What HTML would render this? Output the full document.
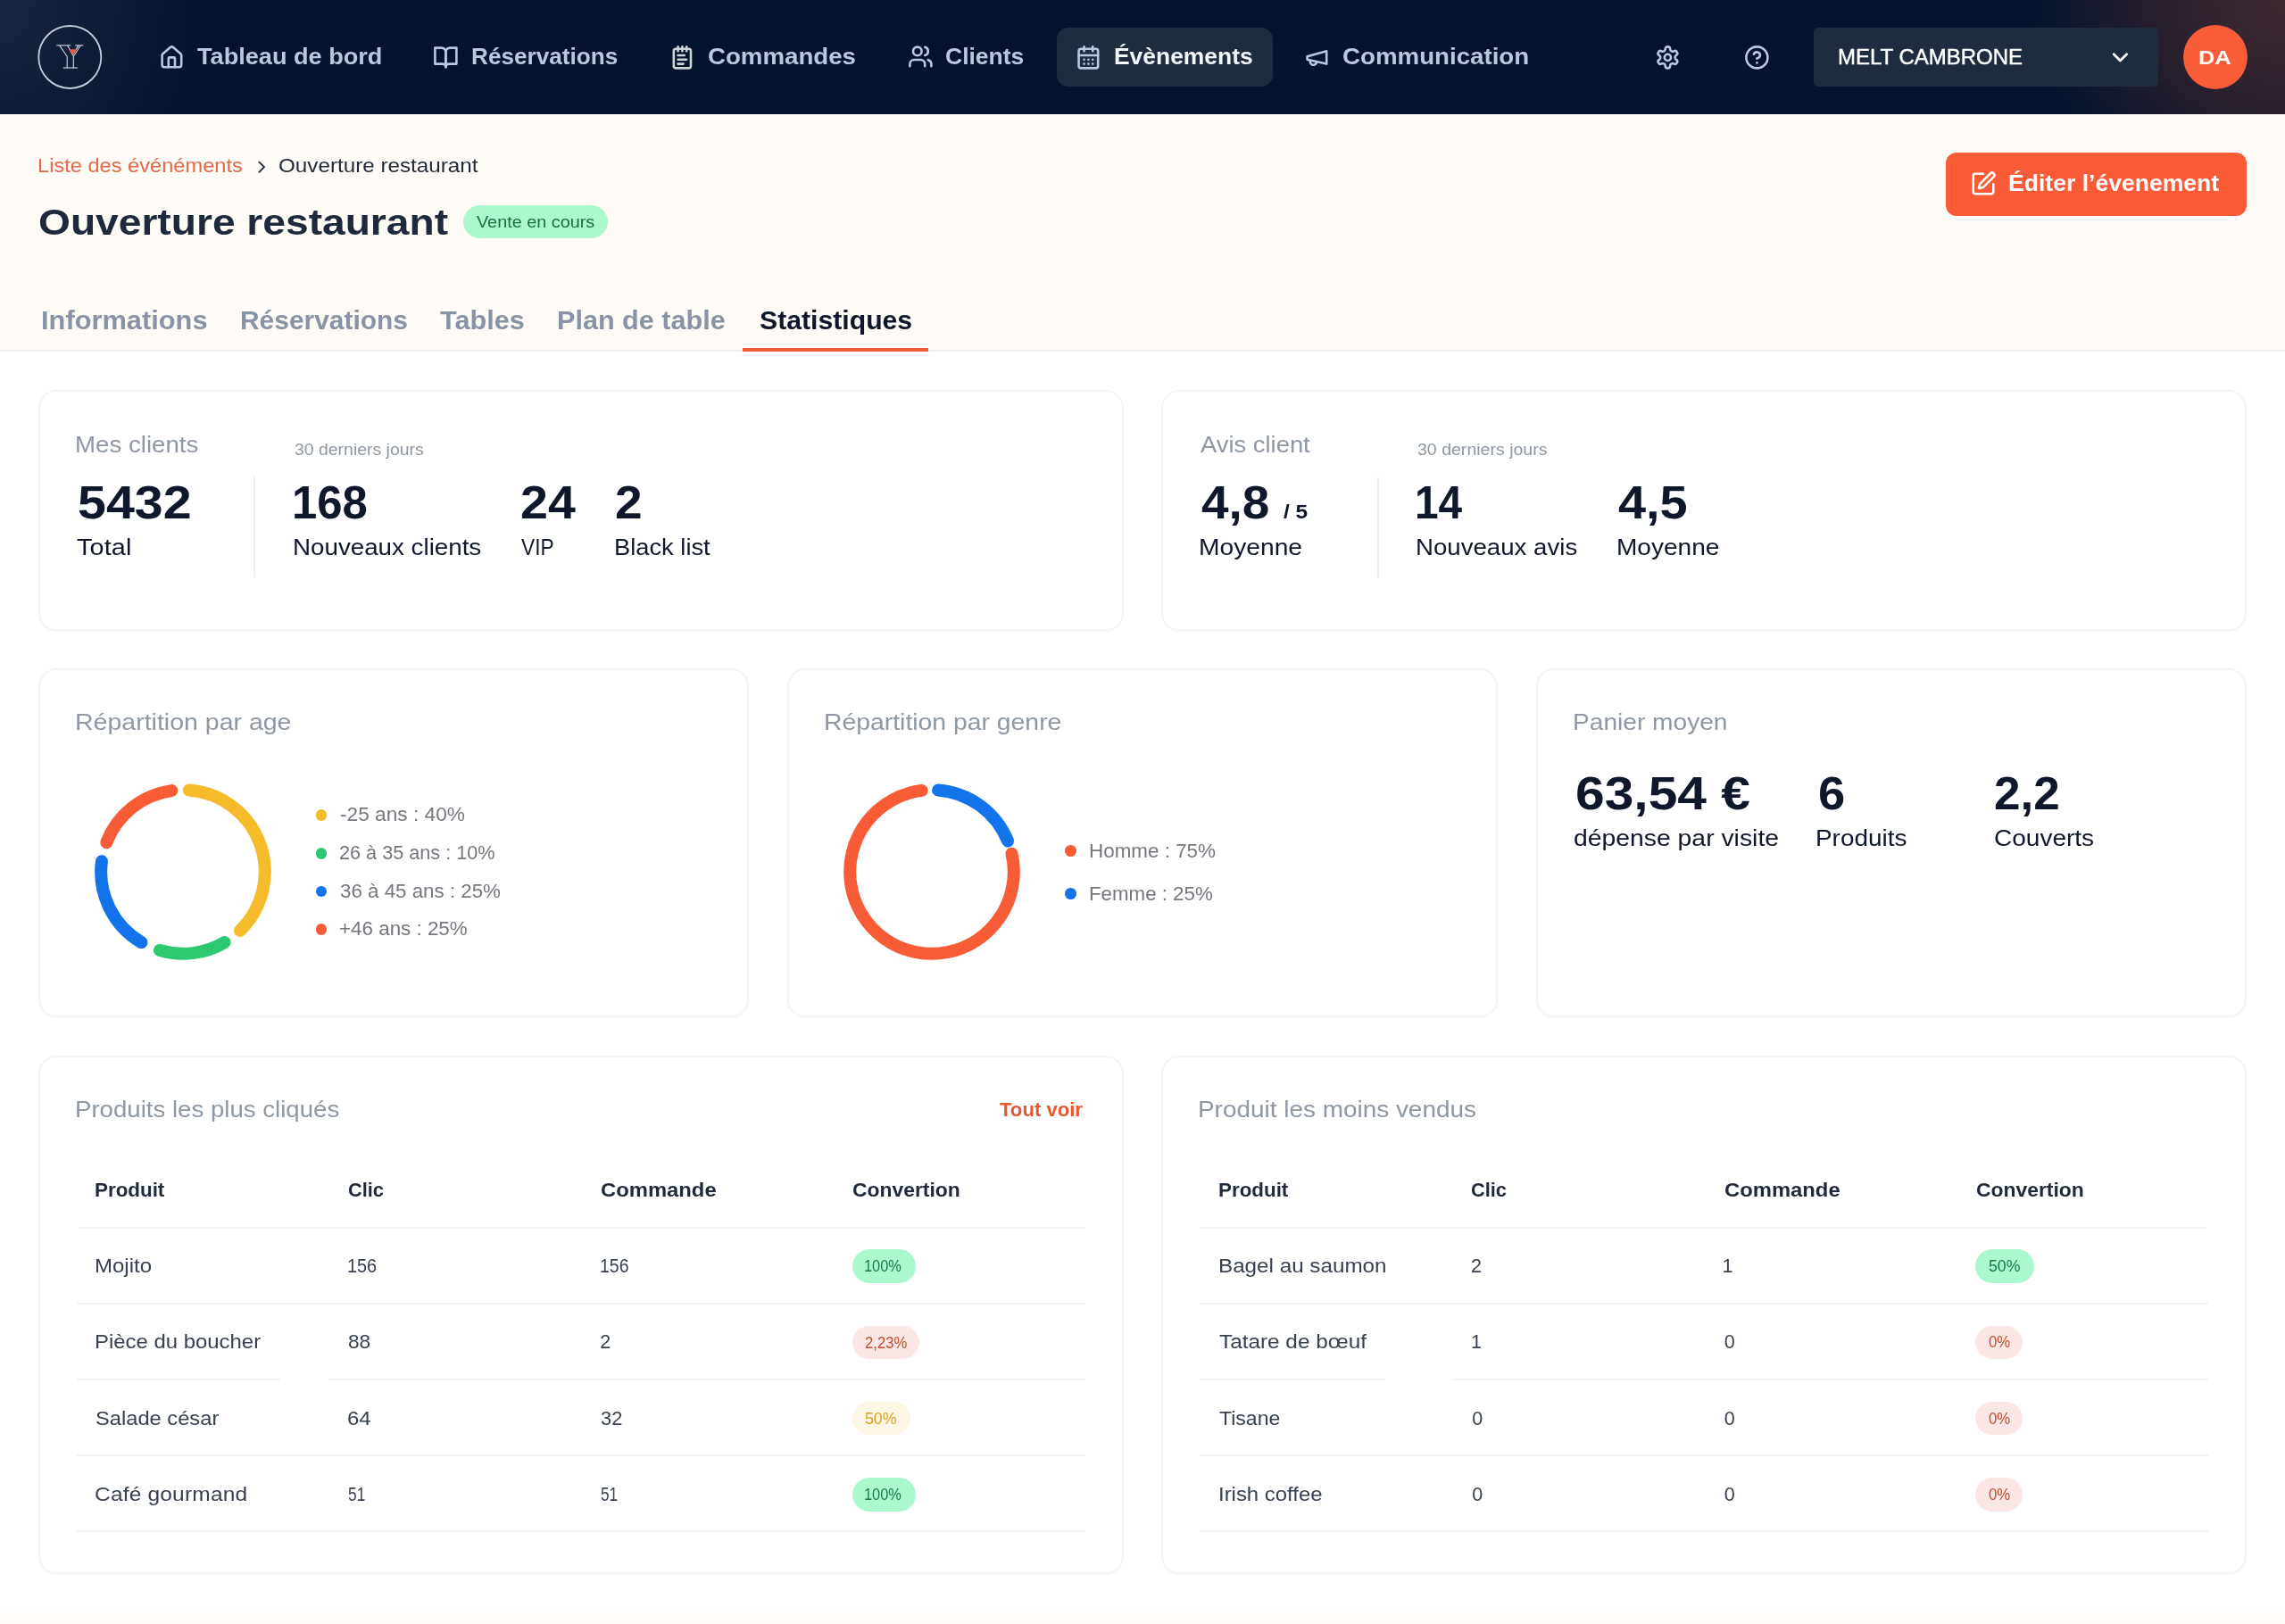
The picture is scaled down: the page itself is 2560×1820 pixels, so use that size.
<!DOCTYPE html>
<html lang="fr">
<head>
<meta charset="utf-8">
<title>Ouverture restaurant – Statistiques</title>
<style>
*{box-sizing:border-box;margin:0;padding:0}
html,body{width:2560px;height:1820px;overflow:hidden}
body{position:relative;background:#ffffff;font-family:"Liberation Sans",sans-serif;-webkit-font-smoothing:antialiased}
.abs,.t,.ic,.card,.ln,.badge,.dot{position:absolute}
.t{white-space:nowrap;line-height:1;display:inline-block;transform-origin:0 50%;font-family:"Liberation Sans",sans-serif}
.nav{left:0;top:0;width:2560px;height:128px;background:radial-gradient(ellipse 235px 300px at 0% 0%,#19253e 0%,#15213a 25%,#0e1b35 50%,#071730 75%,rgba(3,19,44,0) 100%),radial-gradient(ellipse 290px 265px at 100% 0%,#3c2932 0%,#36262f 20%,#2f232f 35%,#281f2d 50%,#1d1b2d 65%,#11172d 80%,#07142c 92%,rgba(3,19,44,0) 100%),#03132c}
.head{left:0;top:128px;width:2560px;height:266px;background:#fffcf8;border-bottom:2px solid #ececed}
.pill{left:1184px;top:31px;width:242px;height:65.5px;border-radius:13px;background:#1f2c40}
.select{left:2032px;top:31px;width:385.5px;height:65.5px;border-radius:5px;background:#1f2c3f}
.avatar{left:2446px;top:28px;width:72px;height:72px;border-radius:50%;background:#f95d38}
.btn{left:2180px;top:171px;width:337px;height:70.5px;border-radius:12px;background:#f85b36}
.vbadge{left:519.3px;top:230px;width:161.5px;height:37.4px;border-radius:19px;background:#abf8cf}
.uline{left:832px;top:389.5px;width:208px;height:4.5px;background:#f05c38}
.card{background:#fff;border:2px solid #f4f4f5;border-radius:20px;box-shadow:0 2px 3px rgba(16,24,40,.018)}
.ln{height:2px;background:#f2f3f4}
.vdiv{width:2px;background:#eff0f2}
.badge{height:37.4px;border-radius:19px}
.g{background:#abf8cf}
.r{background:#fbe6e6}
.y{background:#fef6e5}
.dot{width:12.8px;height:12.8px;border-radius:50%}
.foot{left:0;top:1801px;width:2560px;height:19px;background:linear-gradient(180deg,#ffffff 0%,#fffbf6 100%)}
</style>
</head>
<body>

<div class="abs nav"></div>
<div class="abs head"></div>
<svg class="ic" style="left:38px;top:24px;width:80px;height:80px" viewBox="38 24 80 80" fill="none">
<circle cx="78.3" cy="64" r="35" stroke="#c3cedb" stroke-width="1.8"/>
<g stroke="#d3dbe5" stroke-width="1.1" stroke-linecap="square">
<path d="M63.8 50.9H78.6"/><path d="M84.8 50.9H92.8"/>
<path d="M67 51.3L75.2 63.3V75.6"/>
<path d="M75.8 51.3L81.7 62"/>
<path d="M90 51.3L82.3 63.3V75.6"/><path d="M87.7 51.3L81.9 60.8"/>
<path d="M71.3 76H86.3"/>
</g>
<path d="M77.5 55.2H85.7L81.7 61.8Z" fill="#f0583a"/>
</svg>
<svg class="ic" style="left:177.50px;top:49.60px;width:28.8px;height:28.8px" viewBox="0 0 24 24" fill="none" stroke="#b8c8df" stroke-width="2.15" stroke-linecap="round" stroke-linejoin="round"><path d="M15 21v-8a1 1 0 0 0-1-1h-4a1 1 0 0 0-1 1v8"/><path d="M3 10a2 2 0 0 1 .709-1.528l7-5.999a2 2 0 0 1 2.582 0l7 5.999A2 2 0 0 1 21 10v9a2 2 0 0 1-2 2H5a2 2 0 0 1-2-2z"/></svg>
<svg class="ic" style="left:485.20px;top:49.60px;width:28.8px;height:28.8px" viewBox="0 0 24 24" fill="none" stroke="#b8c8df" stroke-width="2.15" stroke-linecap="round" stroke-linejoin="round"><path d="M2 3h6a4 4 0 0 1 4 4v14a3 3 0 0 0-3-3H2z"/><path d="M22 3h-6a4 4 0 0 0-4 4v14a3 3 0 0 1 3-3h7z"/></svg>
<svg class="ic" style="left:750.20px;top:49.70px;width:28.8px;height:28.8px" viewBox="0 0 24 24" fill="none" stroke="#cdd2d3" stroke-width="2.15" stroke-linecap="round" stroke-linejoin="round"><path d="M8 2v4"/><path d="M12 2v4"/><path d="M16 2v4"/><rect width="16" height="18" x="4" y="4" rx="2"/><path d="M8 10h6"/><path d="M8 14h8"/><path d="M8 18h5"/></svg>
<svg class="ic" style="left:1016.70px;top:49.20px;width:28.8px;height:28.8px" viewBox="0 0 24 24" fill="none" stroke="#b8c8df" stroke-width="2.15" stroke-linecap="round" stroke-linejoin="round"><path d="M16 21v-2a4 4 0 0 0-4-4H6a4 4 0 0 0-4 4v2"/><circle cx="9" cy="7" r="4"/><path d="M22 21v-2a4 4 0 0 0-3-3.87"/><path d="M16 3.13a4 4 0 0 1 0 7.75"/></svg>
<div class="abs pill"></div>
<svg class="ic" style="left:1205.30px;top:49.60px;width:28.8px;height:28.8px" viewBox="0 0 24 24" fill="none" stroke="#b8c8df" stroke-width="2.15" stroke-linecap="round" stroke-linejoin="round"><path d="M8 2v4"/><path d="M16 2v4"/><rect width="18" height="18" x="3" y="4" rx="2"/><path d="M3 10h18"/><path d="M8 14h.01"/><path d="M12 14h.01"/><path d="M16 14h.01"/><path d="M8 18h.01"/><path d="M12 18h.01"/><path d="M16 18h.01"/></svg>
<svg class="ic" style="left:1461.40px;top:49.90px;width:28.8px;height:28.8px" viewBox="0 0 24 24" fill="none" stroke="#b8c8df" stroke-width="2.15" stroke-linecap="round" stroke-linejoin="round"><path d="m3 11 18-5v12L3 14v-3z"/><path d="M11.6 16.8a3 3 0 1 1-5.8-1.6"/></svg>
<svg class="ic" style="left:1853.90px;top:49.60px;width:28.8px;height:28.8px" viewBox="0 0 24 24" fill="none" stroke="#b8c8df" stroke-width="2.15" stroke-linecap="round" stroke-linejoin="round"><path d="M12.22 2h-.44a2 2 0 0 0-2 2v.18a2 2 0 0 1-1 1.73l-.43.25a2 2 0 0 1-2 0l-.15-.08a2 2 0 0 0-2.73.73l-.22.38a2 2 0 0 0 .73 2.73l.15.1a2 2 0 0 1 1 1.72v.51a2 2 0 0 1-1 1.74l-.15.09a2 2 0 0 0-.73 2.73l.22.38a2 2 0 0 0 2.73.73l.15-.08a2 2 0 0 1 2 0l.43.25a2 2 0 0 1 1 1.73V20a2 2 0 0 0 2 2h.44a2 2 0 0 0 2-2v-.18a2 2 0 0 1 1-1.73l.43-.25a2 2 0 0 1 2 0l.15.08a2 2 0 0 0 2.73-.73l.22-.39a2 2 0 0 0-.73-2.73l-.15-.08a2 2 0 0 1-1-1.74v-.5a2 2 0 0 1 1-1.74l.15-.09a2 2 0 0 0 .73-2.73l-.22-.38a2 2 0 0 0-2.73-.73l-.15.08a2 2 0 0 1-2 0l-.43-.25a2 2 0 0 1-1-1.73V4a2 2 0 0 0-2-2z"/><circle cx="12" cy="12" r="3"/></svg>
<svg class="ic" style="left:1953.60px;top:49.60px;width:28.8px;height:28.8px" viewBox="0 0 24 24" fill="none" stroke="#b8c8df" stroke-width="2.15" stroke-linecap="round" stroke-linejoin="round"><circle cx="12" cy="12" r="10"/><path d="M9.09 9a3 3 0 0 1 5.83 1c0 2-3 3-3 3"/><path d="M12 17h.01"/></svg>
<div class="abs select"></div>
<svg class="ic" style="left:2360.90px;top:49.90px;width:28.8px;height:28.8px" viewBox="0 0 24 24" fill="none" stroke="#ffffff" stroke-width="2.3" stroke-linecap="round" stroke-linejoin="round"><path d="m6 9 6 6 6-6"/></svg>
<div class="abs avatar"></div>
<svg class="ic" style="left:282.00px;top:175.90px;width:22.4px;height:22.4px" viewBox="0 0 24 24" fill="none" stroke="#1f2937" stroke-width="2" stroke-linecap="round" stroke-linejoin="round"><path d="m9 18 6-6-6-6"/></svg>
<div class="abs vbadge"></div>
<div class="abs btn"></div>
<svg class="ic" style="left:2207.30px;top:190.60px;width:30px;height:30px" viewBox="0 0 24 24" fill="none" stroke="#ffffff" stroke-width="2" stroke-linecap="round" stroke-linejoin="round"><path d="M12 3H5a2 2 0 0 0-2 2v14a2 2 0 0 0 2 2h14a2 2 0 0 0 2-2v-7"/><path d="M18.375 2.625a1 1 0 0 1 3 3l-9.013 9.014a2 2 0 0 1-.853.505l-2.873.84a.5.5 0 0 1-.62-.62l.84-2.873a2 2 0 0 1 .506-.852z"/></svg>
<div class="abs uline"></div>
<div class="card" style="left:43px;top:437px;width:1216px;height:270px"></div>
<div class="card" style="left:1301px;top:437px;width:1216px;height:270px"></div>
<div class="card" style="left:43px;top:749px;width:796px;height:391px"></div>
<div class="card" style="left:882px;top:749px;width:796px;height:391px"></div>
<div class="card" style="left:1721px;top:749px;width:796px;height:391px"></div>
<div class="card" style="left:43px;top:1183px;width:1216px;height:581px"></div>
<div class="card" style="left:1301px;top:1183px;width:1216px;height:581px"></div>
<div class="abs vdiv" style="left:284.3px;top:534px;height:113px"></div>
<div class="abs vdiv" style="left:1543px;top:534px;height:113px"></div>
<svg class="ic" style="left:94.69999999999999px;top:867.4px;width:220px;height:220px" viewBox="94.69999999999999 867.4 220 220" fill="none" stroke-width="14" stroke-linecap="round"><path d="M211.42 885.85A91.8 91.8 0 0 1 268.58 1043.32" stroke="#f6bb2b"/><path d="M251.29 1056.50A91.8 91.8 0 0 1 178.63 1065.42" stroke="#2cc872"/><path d="M158.11 1056.50A91.8 91.8 0 0 1 113.66 965.58" stroke="#1273eb"/><path d="M118.94 944.65A91.8 91.8 0 0 1 191.92 886.49" stroke="#f85c37"/></svg>
<svg class="ic" style="left:934.0999999999999px;top:867.4px;width:220px;height:220px" viewBox="934.0999999999999 867.4 220 220" fill="none" stroke-width="14" stroke-linecap="round"><path d="M1051.14 885.87A91.8 91.8 0 0 1 1129.16 942.86" stroke="#1273eb"/><path d="M1133.62 957.06A91.8 91.8 0 1 1 1032.75 886.30" stroke="#f85c37"/></svg>
<div class="dot" style="left:353.6px;top:907.2px;background:#f6bb2b"></div>
<div class="dot" style="left:353.6px;top:949.9px;background:#2cc872"></div>
<div class="dot" style="left:353.6px;top:992.6px;background:#1273eb"></div>
<div class="dot" style="left:353.6px;top:1035.2px;background:#f85c37"></div>
<div class="dot" style="left:1192.8px;top:947.0px;background:#f85c37"></div>
<div class="dot" style="left:1192.8px;top:995.2px;background:#1273eb"></div>
<div class="ln" style="left:85.7px;top:1374.6px;width:1130.0px"></div>
<div class="ln" style="left:85.7px;top:1459.8px;width:1130.0px"></div>
<div class="ln" style="left:85.7px;top:1545.0px;width:228.3px"></div>
<div class="ln" style="left:368px;top:1545.0px;width:847.7px"></div>
<div class="ln" style="left:85.7px;top:1630.2px;width:1130.0px"></div>
<div class="ln" style="left:85.7px;top:1715.4px;width:1130.0px"></div>
<div class="ln" style="left:1344.4px;top:1374.6px;width:1130.0px"></div>
<div class="ln" style="left:1344.4px;top:1459.8px;width:1130.0px"></div>
<div class="ln" style="left:1344.4px;top:1545.0px;width:208.4px"></div>
<div class="ln" style="left:1626.8px;top:1545.0px;width:847.6px"></div>
<div class="ln" style="left:1344.4px;top:1630.2px;width:1130.0px"></div>
<div class="ln" style="left:1344.4px;top:1715.4px;width:1130.0px"></div>
<div class="badge g" style="left:954.8px;top:1400.3px;width:71.2px"></div>
<div class="badge r" style="left:954.8px;top:1485.6px;width:75.7px"></div>
<div class="badge y" style="left:954.8px;top:1570.9px;width:64.9px"></div>
<div class="badge g" style="left:954.8px;top:1656.2px;width:71.2px"></div>
<div class="badge g" style="left:2213.3px;top:1400.3px;width:65.8px"></div>
<div class="badge r" style="left:2213.3px;top:1485.6px;width:53.2px"></div>
<div class="badge r" style="left:2213.3px;top:1570.9px;width:53.2px"></div>
<div class="badge r" style="left:2213.3px;top:1656.2px;width:53.2px"></div>
<div class="abs foot"></div>
<div class="abs" style="left:0;top:0;width:2560px;height:1820px;will-change:transform">
<nav>
<span class="t" style="left:221.30px;top:51.31px;font-size:25.5px;font-weight:700;color:#b8c8df;transform:scaleX(1.0632);">Tableau de bord</span>
<span class="t" style="left:527.97px;top:51.31px;font-size:25.5px;font-weight:700;color:#b8c8df;transform:scaleX(1.0253);">Réservations</span>
<span class="t" style="left:792.62px;top:51.31px;font-size:25.5px;font-weight:700;color:#b8c8df;transform:scaleX(1.0846);">Commandes</span>
<span class="t" style="left:1058.66px;top:51.31px;font-size:25.5px;font-weight:700;color:#b8c8df;transform:scaleX(1.0389);">Clients</span>
<span class="t" style="left:1247.96px;top:51.31px;font-size:25.5px;font-weight:700;color:#f3f6fa;transform:scaleX(1.0359);">Évènements</span>
<span class="t" style="left:1503.61px;top:51.31px;font-size:25.5px;font-weight:700;color:#b8c8df;transform:scaleX(1.0858);">Communication</span>
<span class="t" style="left:2059.34px;top:51.56px;font-size:24.5px;font-weight:400;color:#ffffff;transform:scaleX(0.9787);-webkit-text-stroke:0.45px #fff;">MELT CAMBRONE</span>
<span class="t" style="left:2462.87px;top:53.75px;font-size:22.5px;font-weight:700;color:#ffffff;transform:scaleX(1.1296);">DA</span>
</nav>
<header>
<span class="t" style="left:42.40px;top:176.20px;font-size:21.5px;font-weight:400;color:#e4684a;transform:scaleX(1.0988);">Liste des événéments</span>
<span class="t" style="left:312.47px;top:176.20px;font-size:21.5px;font-weight:400;color:#1f2937;transform:scaleX(1.1267);">Ouverture restaurant</span>
<span class="t" style="left:42.87px;top:229.39px;font-size:41px;font-weight:700;color:#1e293b;transform:scaleX(1.1255);">Ouverture restaurant</span>
<span class="t" style="left:533.90px;top:239.59px;font-size:18.2px;font-weight:400;color:#17703f;transform:scaleX(1.0896);">Vente en cours</span>
<span class="t" style="left:2249.97px;top:193.16px;font-size:25.8px;font-weight:700;color:#ffffff;transform:scaleX(1.0293);">Éditer l’évenement</span>
<span class="t" style="left:46.22px;top:345.19px;font-size:28.6px;font-weight:700;color:#8894a5;transform:scaleX(1.0774);">Informations</span>
<span class="t" style="left:268.55px;top:345.19px;font-size:28.6px;font-weight:700;color:#8894a5;transform:scaleX(1.0468);">Réservations</span>
<span class="t" style="left:493.40px;top:345.19px;font-size:28.6px;font-weight:700;color:#8894a5;transform:scaleX(1.0701);">Tables</span>
<span class="t" style="left:624.23px;top:345.19px;font-size:28.6px;font-weight:700;color:#8894a5;transform:scaleX(1.0695);">Plan de table</span>
<span class="t" style="left:850.90px;top:345.19px;font-size:28.6px;font-weight:700;color:#0f172a;transform:scaleX(1.0561);">Statistiques</span>
</header>
<main>
<span class="t" style="left:83.91px;top:486.38px;font-size:25.3px;font-weight:400;color:#8e98a4;transform:scaleX(1.0931);">Mes clients</span>
<span class="t" style="left:329.60px;top:496.10px;font-size:17.6px;font-weight:400;color:#8e98a4;transform:scaleX(1.1040);">30 derniers jours</span>
<span class="t" style="left:86.50px;top:537.18px;font-size:52px;font-weight:700;color:#0f172a;transform:scaleX(1.1032);">5432</span>
<span class="t" style="left:86.10px;top:600.58px;font-size:25.3px;font-weight:400;color:#0f172a;letter-spacing:0.117px;transform:scaleX(1.1400);">Total</span>
<span class="t" style="left:327.27px;top:537.18px;font-size:52px;font-weight:700;color:#0f172a;transform:scaleX(0.9766);">168</span>
<span class="t" style="left:328.01px;top:600.58px;font-size:25.3px;font-weight:400;color:#0f172a;transform:scaleX(1.0964);">Nouveaux clients</span>
<span class="t" style="left:582.93px;top:537.18px;font-size:52px;font-weight:700;color:#0f172a;transform:scaleX(1.0682);">24</span>
<span class="t" style="left:584.00px;top:600.58px;font-size:25.3px;font-weight:400;color:#0f172a;transform:scaleX(0.8972);">VIP</span>
<span class="t" style="left:689.44px;top:537.18px;font-size:52px;font-weight:700;color:#0f172a;transform:scaleX(1.0577);">2</span>
<span class="t" style="left:688.34px;top:600.58px;font-size:25.3px;font-weight:400;color:#0f172a;transform:scaleX(1.0790);">Black list</span>
<span class="t" style="left:1345.00px;top:486.38px;font-size:25.3px;font-weight:400;color:#8e98a4;transform:scaleX(1.0821);">Avis client</span>
<span class="t" style="left:1588.10px;top:496.10px;font-size:17.6px;font-weight:400;color:#8e98a4;transform:scaleX(1.1101);">30 derniers jours</span>
<span class="t" style="left:1345.80px;top:536.98px;font-size:52px;font-weight:700;color:#0f172a;transform:scaleX(1.0565);">4,8</span>
<span class="t" style="left:1437.60px;top:563.60px;font-size:21.5px;font-weight:700;color:#0f172a;transform:scaleX(1.1359);">/ 5</span>
<span class="t" style="left:1342.77px;top:600.58px;font-size:25.3px;font-weight:400;color:#0f172a;transform:scaleX(1.1149);">Moyenne</span>
<span class="t" style="left:1585.24px;top:537.18px;font-size:52px;font-weight:700;color:#0f172a;transform:scaleX(0.9195);">14</span>
<span class="t" style="left:1585.82px;top:600.58px;font-size:25.3px;font-weight:400;color:#0f172a;transform:scaleX(1.0920);">Nouveaux avis</span>
<span class="t" style="left:1812.80px;top:537.18px;font-size:52px;font-weight:700;color:#0f172a;transform:scaleX(1.0747);">4,5</span>
<span class="t" style="left:1810.58px;top:600.58px;font-size:25.3px;font-weight:400;color:#0f172a;transform:scaleX(1.1089);">Moyenne</span>
<span class="t" style="left:84.15px;top:797.08px;font-size:25.3px;font-weight:400;color:#8e98a4;transform:scaleX(1.1269);">Répartition par age</span>
<span class="t" style="left:381.30px;top:902.05px;font-size:21.8px;font-weight:400;color:#74787e;transform:scaleX(1.0402);">-25 ans : 40%</span>
<span class="t" style="left:380.31px;top:944.75px;font-size:21.8px;font-weight:400;color:#74787e;transform:scaleX(0.9929);">26 à 35 ans : 10%</span>
<span class="t" style="left:381.30px;top:988.45px;font-size:21.8px;font-weight:400;color:#74787e;transform:scaleX(1.0238);">36 à 45 ans : 25%</span>
<span class="t" style="left:380.27px;top:1030.05px;font-size:21.8px;font-weight:400;color:#74787e;transform:scaleX(1.0268);">+46 ans : 25%</span>
<span class="t" style="left:923.36px;top:797.08px;font-size:25.3px;font-weight:400;color:#8e98a4;transform:scaleX(1.1207);">Répartition par genre</span>
<span class="t" style="left:1219.67px;top:943.15px;font-size:21.8px;font-weight:400;color:#74787e;transform:scaleX(1.0284);">Homme : 75%</span>
<span class="t" style="left:1219.68px;top:991.35px;font-size:21.8px;font-weight:400;color:#74787e;transform:scaleX(1.0224);">Femme : 25%</span>
<span class="t" style="left:1761.78px;top:797.08px;font-size:25.3px;font-weight:400;color:#8e98a4;transform:scaleX(1.1117);">Panier moyen</span>
<span class="t" style="left:1764.77px;top:862.88px;font-size:52px;font-weight:700;color:#0f172a;transform:scaleX(1.1295);">63,54 €</span>
<span class="t" style="left:1762.88px;top:926.88px;font-size:25.3px;font-weight:400;color:#0f172a;transform:scaleX(1.1203);">dépense par visite</span>
<span class="t" style="left:2036.56px;top:862.88px;font-size:52px;font-weight:700;color:#0f172a;transform:scaleX(1.0444);">6</span>
<span class="t" style="left:2033.89px;top:926.88px;font-size:25.3px;font-weight:400;color:#0f172a;transform:scaleX(1.1026);">Produits</span>
<span class="t" style="left:2234.18px;top:862.88px;font-size:52px;font-weight:700;color:#0f172a;transform:scaleX(1.0207);">2,2</span>
<span class="t" style="left:2234.09px;top:926.88px;font-size:25.3px;font-weight:400;color:#0f172a;transform:scaleX(1.1077);">Couverts</span>
<span class="t" style="left:83.82px;top:1230.98px;font-size:25.3px;font-weight:400;color:#8e98a4;transform:scaleX(1.0915);">Produits les plus cliqués</span>
<span class="t" style="left:1120.40px;top:1234.20px;font-size:21.5px;font-weight:700;color:#e8572f;transform:scaleX(1.0286);">Tout voir</span>
<span class="t" style="left:1341.79px;top:1230.98px;font-size:25.3px;font-weight:400;color:#8e98a4;transform:scaleX(1.1037);">Produit les moins vendus</span>
<span class="t" style="left:105.96px;top:1323.90px;font-size:21.5px;font-weight:700;color:#1e293b;transform:scaleX(1.0408);">Produit</span>
<span class="t" style="left:389.70px;top:1323.90px;font-size:21.5px;font-weight:700;color:#1e293b;transform:scaleX(1.0133);">Clic</span>
<span class="t" style="left:672.80px;top:1323.90px;font-size:21.5px;font-weight:700;color:#1e293b;transform:scaleX(1.1074);">Commande</span>
<span class="t" style="left:955.10px;top:1323.90px;font-size:21.5px;font-weight:700;color:#1e293b;transform:scaleX(1.0646);">Convertion</span>
<span class="t" style="left:1364.66px;top:1323.90px;font-size:21.5px;font-weight:700;color:#1e293b;transform:scaleX(1.0408);">Produit</span>
<span class="t" style="left:1648.40px;top:1323.90px;font-size:21.5px;font-weight:700;color:#1e293b;transform:scaleX(1.0133);">Clic</span>
<span class="t" style="left:1931.50px;top:1323.90px;font-size:21.5px;font-weight:700;color:#1e293b;transform:scaleX(1.1074);">Commande</span>
<span class="t" style="left:2213.80px;top:1323.90px;font-size:21.5px;font-weight:700;color:#1e293b;transform:scaleX(1.0646);">Convertion</span>
<span class="t" style="left:106.28px;top:1409.00px;font-size:21.5px;font-weight:400;color:#374151;transform:scaleX(1.1171);">Mojito</span>
<span class="t" style="left:389.38px;top:1409.00px;font-size:21.5px;font-weight:400;color:#374151;transform:scaleX(0.9223);">156</span>
<span class="t" style="left:672.29px;top:1409.00px;font-size:21.5px;font-weight:400;color:#374151;transform:scaleX(0.9051);">156</span>
<span class="t" style="left:106.29px;top:1494.20px;font-size:21.5px;font-weight:400;color:#374151;transform:scaleX(1.1121);">Pièce du boucher</span>
<span class="t" style="left:390.30px;top:1494.20px;font-size:21.5px;font-weight:400;color:#374151;transform:scaleX(1.0519);">88</span>
<span class="t" style="left:672.20px;top:1494.20px;font-size:21.5px;font-weight:400;color:#374151;">2</span>
<span class="t" style="left:107.40px;top:1579.50px;font-size:21.5px;font-weight:400;color:#374151;transform:scaleX(1.1019);">Salade césar</span>
<span class="t" style="left:389.19px;top:1579.50px;font-size:21.5px;font-weight:400;color:#374151;transform:scaleX(1.1108);">64</span>
<span class="t" style="left:673.20px;top:1579.50px;font-size:21.5px;font-weight:400;color:#374151;transform:scaleX(1.0149);">32</span>
<span class="t" style="left:106.26px;top:1664.80px;font-size:21.5px;font-weight:400;color:#374151;letter-spacing:0.160px;transform:scaleX(1.1400);">Café gourmand</span>
<span class="t" style="left:390.30px;top:1664.80px;font-size:21.5px;font-weight:400;color:#374151;transform:scaleX(0.8058);">51</span>
<span class="t" style="left:673.20px;top:1664.80px;font-size:21.5px;font-weight:400;color:#374151;letter-spacing:-0.207px;transform:scaleX(0.8000);">51</span>
<span class="t" style="left:1365.07px;top:1409.00px;font-size:21.5px;font-weight:400;color:#374151;transform:scaleX(1.1265);">Bagel au saumon</span>
<span class="t" style="left:1647.90px;top:1409.00px;font-size:21.5px;font-weight:400;color:#374151;">2</span>
<span class="t" style="left:1929.40px;top:1409.00px;font-size:21.5px;font-weight:400;color:#374151;">1</span>
<span class="t" style="left:1366.20px;top:1494.20px;font-size:21.5px;font-weight:400;color:#374151;transform:scaleX(1.1315);">Tatare de bœuf</span>
<span class="t" style="left:1647.90px;top:1494.20px;font-size:21.5px;font-weight:400;color:#374151;">1</span>
<span class="t" style="left:1931.80px;top:1494.20px;font-size:21.5px;font-weight:400;color:#374151;">0</span>
<span class="t" style="left:1366.20px;top:1579.50px;font-size:21.5px;font-weight:400;color:#374151;transform:scaleX(1.0721);">Tisane</span>
<span class="t" style="left:1649.20px;top:1579.50px;font-size:21.5px;font-weight:400;color:#374151;">0</span>
<span class="t" style="left:1931.80px;top:1579.50px;font-size:21.5px;font-weight:400;color:#374151;">0</span>
<span class="t" style="left:1365.09px;top:1664.80px;font-size:21.5px;font-weight:400;color:#374151;transform:scaleX(1.1117);">Irish coffee</span>
<span class="t" style="left:1649.20px;top:1664.80px;font-size:21.5px;font-weight:400;color:#374151;">0</span>
<span class="t" style="left:1931.80px;top:1664.80px;font-size:21.5px;font-weight:400;color:#374151;">0</span>
<span class="t" style="left:968.46px;top:1411.49px;font-size:17.5px;font-weight:400;color:#1b7a4b;transform:scaleX(0.9352);">100%</span>
<span class="t" style="left:969.40px;top:1496.59px;font-size:17.5px;font-weight:400;color:#c1502f;transform:scaleX(0.9519);">2,23%</span>
<span class="t" style="left:969.40px;top:1581.99px;font-size:17.5px;font-weight:400;color:#d9a321;transform:scaleX(1.0126);">50%</span>
<span class="t" style="left:968.46px;top:1667.29px;font-size:17.5px;font-weight:400;color:#1b7a4b;transform:scaleX(0.9352);">100%</span>
<span class="t" style="left:2228.00px;top:1411.49px;font-size:17.5px;font-weight:400;color:#1b7a4b;transform:scaleX(1.0126);">50%</span>
<span class="t" style="left:2228.00px;top:1495.59px;font-size:17.5px;font-weight:400;color:#c1502f;transform:scaleX(0.9582);">0%</span>
<span class="t" style="left:2228.00px;top:1581.99px;font-size:17.5px;font-weight:400;color:#c1502f;transform:scaleX(0.9582);">0%</span>
<span class="t" style="left:2228.00px;top:1667.29px;font-size:17.5px;font-weight:400;color:#c1502f;transform:scaleX(0.9582);">0%</span>
</main>
</div>
</body></html>
